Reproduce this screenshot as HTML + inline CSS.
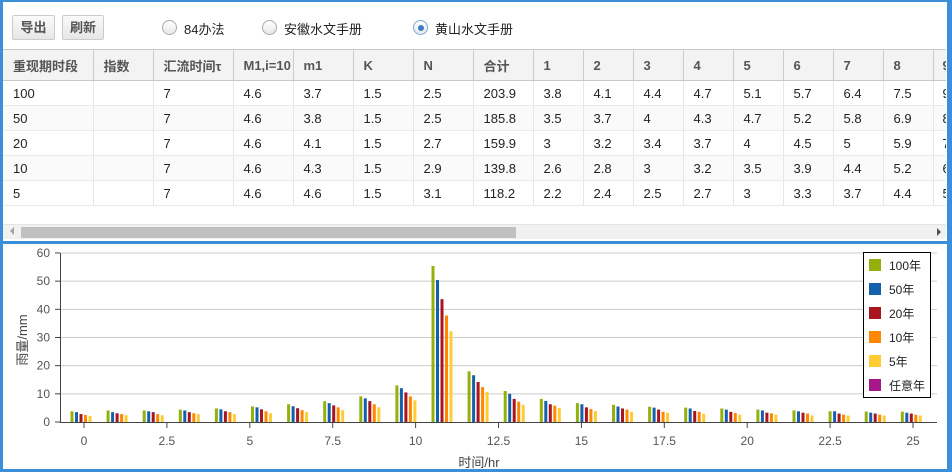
<!DOCTYPE html>
<html><head><meta charset="utf-8">
<style>
*{margin:0;padding:0;box-sizing:border-box}
body{width:952px;height:472px;overflow:hidden;background:#fff;font-family:"Liberation Sans","Noto Sans CJK SC",sans-serif;position:relative}
.top{position:absolute;left:0;top:0;width:952px;height:243px;border:2px solid #3a8fd8;border-left-width:3px;border-right-width:5px;border-bottom-width:2px;background:#fff}
.bot{position:absolute;left:0;top:242px;width:952px;height:230px;border:2px solid #3a8fd8;border-left-width:3px;border-right-width:5px;border-bottom-width:3px;background:#fff}
.btn{position:absolute;top:13px;height:25px;border:1px solid #ccc;border-radius:2px;background:linear-gradient(#fafafa,#e6e6e6);font-size:13px;font-weight:bold;color:#555;line-height:23px;text-align:center}
.rad{position:absolute;top:18px;width:15px;height:15px;border-radius:50%;border:1px solid #aaa;background:linear-gradient(#fff,#e8e8e8)}
.rl{position:absolute;top:17px;font-size:13px;color:#222}
.tw{position:absolute;left:3px;top:49px;width:943px;height:175px;overflow:hidden}
table{border-collapse:collapse;font-size:13px;color:#222;table-layout:fixed;width:1000px}
td,th{height:25px;padding:0 0 0 10px;text-align:left;border-right:1px solid #e6e6e6;border-bottom:1px solid #eaeaea;white-space:nowrap;overflow:hidden}
th{height:31px;background:#f3f3f3;color:#555;font-weight:bold;border-right:1px solid #ccc;border-top:1px solid #c8c8c8;border-bottom:1px solid #c8c8c8}
tr.a td{background:#fafafa}
</style></head><body>
<div class="top">
<div class="btn" style="left:9px;width:43px">导出</div>
<div class="btn" style="left:59px;width:42px">刷新</div>
<div class="rad" style="left:159px"></div><div class="rl" style="left:181px">84办法</div>
<div class="rad" style="left:259px"></div><div class="rl" style="left:281px">安徽水文手册</div>
<div class="rad" style="left:410px;border-color:#7ba7d6"><div style="position:absolute;left:3.5px;top:3.5px;width:6px;height:6px;border-radius:50%;background:#3b7dc4"></div></div><div class="rl" style="left:432px">黄山水文手册</div>
</div>
<div class="tw">
<table>
<colgroup><col style="width:90px"><col style="width:60px"><col style="width:80px"><col style="width:60px"><col style="width:60px"><col style="width:60px"><col style="width:60px"><col style="width:60px"><col style="width:50px"><col style="width:50px"><col style="width:50px"><col style="width:50px"><col style="width:50px"><col style="width:50px"><col style="width:50px"><col style="width:50px"><col style="width:70px"></colgroup>
<tr><th>重现期时段</th><th>指数</th><th>汇流时间τ</th><th>M1,i=10</th><th>m1</th><th>K</th><th>N</th><th>合计</th><th>1</th><th>2</th><th>3</th><th>4</th><th>5</th><th>6</th><th>7</th><th>8</th><th style="padding-left:9px">9</th></tr>
<tr><td>100</td><td></td><td>7</td><td>4.6</td><td>3.7</td><td>1.5</td><td>2.5</td><td>203.9</td><td>3.8</td><td>4.1</td><td>4.4</td><td>4.7</td><td>5.1</td><td>5.7</td><td>6.4</td><td>7.5</td><td style="padding-left:9px">9</td></tr>
<tr class="a"><td>50</td><td></td><td>7</td><td>4.6</td><td>3.8</td><td>1.5</td><td>2.5</td><td>185.8</td><td>3.5</td><td>3.7</td><td>4</td><td>4.3</td><td>4.7</td><td>5.2</td><td>5.8</td><td>6.9</td><td style="padding-left:9px">8</td></tr>
<tr><td>20</td><td></td><td>7</td><td>4.6</td><td>4.1</td><td>1.5</td><td>2.7</td><td>159.9</td><td>3</td><td>3.2</td><td>3.4</td><td>3.7</td><td>4</td><td>4.5</td><td>5</td><td>5.9</td><td style="padding-left:9px">7</td></tr>
<tr class="a"><td>10</td><td></td><td>7</td><td>4.6</td><td>4.3</td><td>1.5</td><td>2.9</td><td>139.8</td><td>2.6</td><td>2.8</td><td>3</td><td>3.2</td><td>3.5</td><td>3.9</td><td>4.4</td><td>5.2</td><td style="padding-left:9px">6</td></tr>
<tr><td>5</td><td></td><td>7</td><td>4.6</td><td>4.6</td><td>1.5</td><td>3.1</td><td>118.2</td><td>2.2</td><td>2.4</td><td>2.5</td><td>2.7</td><td>3</td><td>3.3</td><td>3.7</td><td>4.4</td><td style="padding-left:9px">5</td></tr>
</table>
</div>
<div style="position:absolute;left:3px;top:224px;width:943px;height:15px;background:#f1f1f1;border-top:1px solid #e4e4e4"></div>
<div style="position:absolute;left:21px;top:227px;width:495px;height:11px;background:#c1c1c1"></div>
<div style="position:absolute;left:10px;top:227px;width:0;height:0;border-top:4px solid transparent;border-bottom:4px solid transparent;border-right:4px solid #a3a3a3"></div>
<div style="position:absolute;left:937px;top:228px;width:0;height:0;border-top:4px solid transparent;border-bottom:4px solid transparent;border-left:4px solid #505050"></div>
<div class="bot"></div>
<svg id="ch" style="position:absolute;left:0;top:0" width="952" height="472" font-family="Liberation Sans, Noto Sans CJK SC, sans-serif" font-size="12"></svg>
<script>
var s='',Y0=422,k=2.817;
for(var v=10;v<=60;v+=10){var y=Y0-v*k;s+='<line x1="60" x2="937" y1="'+y+'" y2="'+y+'" stroke="#ccc"/>';}
for(var v=0;v<=60;v+=10){var y=Y0-v*k;s+='<text x="50" y="'+(y+4)+'" text-anchor="end" fill="#555">'+v+'</text><line x1="55" x2="60" y1="'+y+'" y2="'+y+'" stroke="#444"/>';}
s+='<line x1="60.5" x2="60.5" y1="253" y2="422" stroke="#444"/><line x1="60" x2="937" y1="422.5" y2="422.5" stroke="#444"/>';
var L=['0','2.5','5','7.5','10','12.5','15','17.5','20','22.5','25'];
for(var i=0;i<11;i++){var x=84+i*82.9;s+='<line x1="'+x+'" x2="'+x+'" y1="422" y2="428" stroke="#444"/><text x="'+x+'" y="445" text-anchor="middle" fill="#555">'+L[i]+'</text>';}
var D=[[3.8,3.5,2.8,2.5,2.1],[4.1,3.5,3.1,2.8,2.4],[4.1,3.8,3.5,2.8,2.4],[4.4,4.1,3.5,3.1,2.8],[4.8,4.5,3.8,3.5,2.8],[5.5,5.2,4.5,3.8,3.1],[6.3,5.6,4.9,4.2,3.5],[7.4,6.7,5.9,5.2,4.2],[9.1,8.4,7.4,6.3,5.2],[13,12,10.5,9.1,7.7],[55.4,50.4,43.6,37.8,32.2],[18,16.6,14.2,12.4,10.7],[11,10,8.2,7.2,6.1],[8.2,7.5,6.3,5.8,5],[6.7,6.3,5.2,4.6,3.9],[6.1,5.5,4.8,4.4,3.6],[5.4,5.1,4.4,3.6,3.3],[5.1,4.8,3.9,3.6,2.9],[4.8,4.4,3.6,3.2,2.6],[4.4,4.1,3.3,3.1,2.6],[4.1,3.8,3.3,3,2.3],[3.8,3.8,3,2.6,2.3],[3.7,3.3,3,2.6,2.3],[3.7,3.3,3,2.6,2.3]];
var C=['#94b00c','#1560ad','#a8151f','#ff8800','#ffcc33','#a6188a'],O=[0,4.5,9,13.5,18];
for(var i=0;i<24;i++)for(var j=0;j<5;j++){var h=D[i][j]*k;s+='<rect x="'+(70.5+i*36.1+O[j])+'" y="'+(Y0-h)+'" width="3" height="'+h+'" fill="'+C[j]+'"/>';}
s+='<text transform="translate(27,340) rotate(-90)" text-anchor="middle" fill="#444" font-size="13">雨量/mm</text>';
s+='<text x="479" y="467" text-anchor="middle" fill="#444" font-size="13">时间/hr</text>';
s+='<rect x="863.5" y="252.5" width="67" height="145" fill="#fff" stroke="#000"/>';
var N=['100年','50年','20年','10年','5年','任意年'];
for(var j=0;j<6;j++){var y=259+j*24;s+='<rect x="869" y="'+y+'" width="12" height="12" fill="'+C[j]+'"/><text x="889" y="'+(y+11)+'" fill="#222">'+N[j]+'</text>';}
document.getElementById('ch').innerHTML=s;
</script>
</body></html>
